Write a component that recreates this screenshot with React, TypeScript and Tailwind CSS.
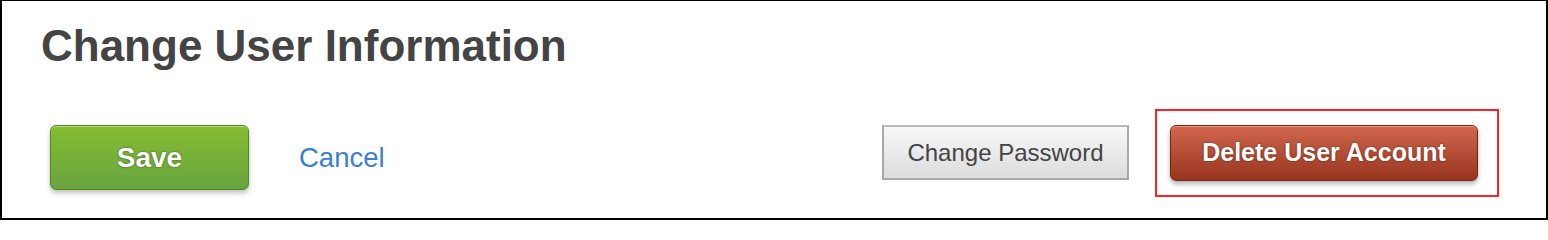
export default function App() {
  return (
    <div className="w-[1548px] h-[220px] bg-white border-black border-t border-l-2 border-r-2 border-b-2 font-['Liberation_Sans',Arial,sans-serif]">
      <h1 className="pt-[23px] pl-[39px] text-[44px] leading-[44px] font-bold text-[#444444]">
        Change User Information
      </h1>

      <div className="mt-[57px] flex items-start pl-[48px] pr-[47px]">
        <button className="w-[199px] h-[65px] rounded-[6px] border border-[#4e8a1c] bg-gradient-to-b from-[#86bc30] to-[#68a43f] text-white text-[28px] font-bold [text-shadow:0_0_2px_rgba(40,70,10,0.9)] shadow-[inset_0_1px_0_rgba(255,255,255,0.45),0_3px_5px_rgba(0,0,0,0.25)]">
          Save
        </button>

        <div className="ml-[50px] h-[65px] flex items-center">
          <a href="#" className="text-[27.5px] leading-none text-[#3a7fd0]">
            Cancel
          </a>
        </div>

        <button className="ml-auto w-[247px] h-[55px] border-2 border-[#a8a8a8] border-t-[#b8b8b8] bg-gradient-to-b from-[#f8f8f8] to-[#dcdcdc] text-[24px] text-[#444444]">
          Change Password
        </button>

        {/* highlight box */}
        <div className="ml-[26px] -mt-[16px] border-2 border-[#ff2222] pt-[14px] pl-[13px] pr-[19px] pb-[14px]">
          <button className="w-[308px] h-[56px] rounded-[6px] border border-[#6e2818] bg-gradient-to-b from-[#d1674d] to-[#98341f] text-white text-[25px] font-bold [text-shadow:0_0_2px_rgba(80,20,10,0.8)] shadow-[inset_0_1px_0_rgba(255,255,255,0.35),0_3px_5px_rgba(0,0,0,0.3)]">
            Delete User Account
          </button>
        </div>
      </div>
    </div>
  );
}
